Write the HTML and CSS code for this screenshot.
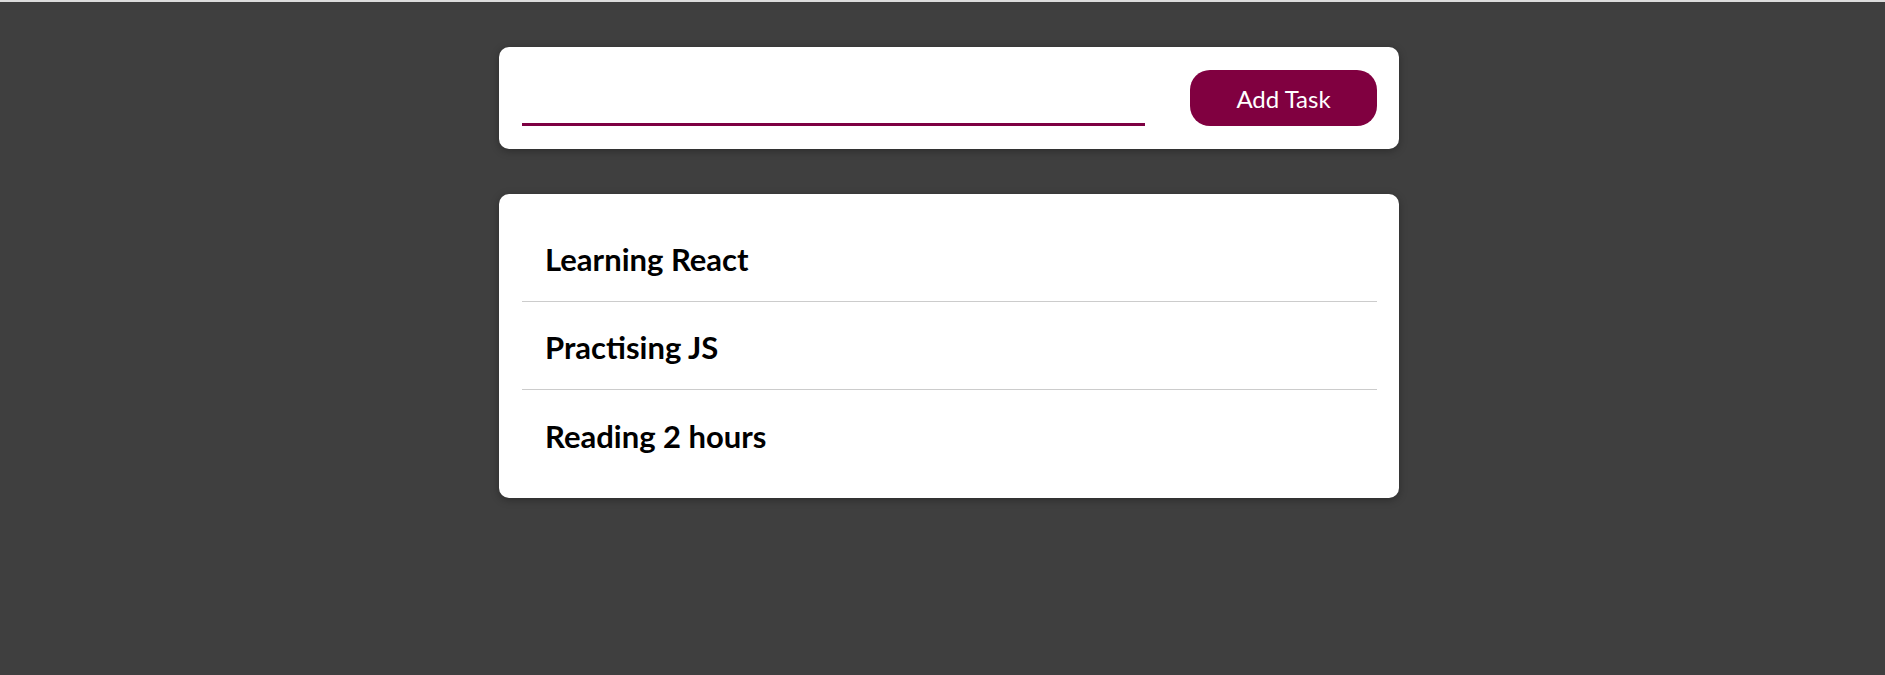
FILE: index.html
```html
<!DOCTYPE html>
<html lang="en">
<head>
<meta charset="utf-8">
<title>Tasks</title>
<link rel="stylesheet" href="styles.css">
</head>
<body>
<main class="app">
  <form class="card task-form" onsubmit="return false">
    <input class="task-input" type="text" aria-label="Task">
    <button class="add-btn" type="submit">Add Task</button>
  </form>
  <section class="card task-list-card">
    <ul class="task-list">
      <li class="task-item">Learning React</li>
      <li class="task-item">Practising JS</li>
      <li class="task-item">Reading 2 hours</li>
    </ul>
  </section>
</main>
</body>
</html>
```
FILE: styles.css
```css
* { box-sizing: border-box; }
html, body { height: 100%; }
body {
  margin: 0;
  background: #3f3f3f;
  border-top: 2px solid #dcdcdc;
  padding-left: 13px;
  font-family: "Lato", "Open Sans", sans-serif;
}
.app {
  width: 900px;
  margin: 45px auto 0;
  display: flex;
  flex-direction: column;
  gap: 45px;
}
.card {
  background: #fff;
  border-radius: 10px;
  box-shadow: 0 2px 8px rgba(0, 0, 0, 0.3);
}
.task-form {
  height: 102px;
  display: flex;
  align-items: flex-end;
  justify-content: space-between;
  padding: 23px 22px 23px 23px;
  margin: 0;
}
.task-input {
  width: 623px;
  height: 32px;
  border: none;
  border-bottom: 3px solid #7d0042;
  outline: none;
  font: inherit;
  font-size: 22px;
  padding: 0 4px;
  background: transparent;
}
.add-btn {
  width: 187px;
  height: 56px;
  border: none;
  border-radius: 20px;
  background: #800040;
  color: #fff;
  font-family: inherit;
  font-size: 24px;
  cursor: pointer;
}
.task-list-card {
  padding: 20px 22px 20px 23px;
}
.task-list {
  list-style: none;
  margin: 0;
  padding: 0;
}
.task-item {
  height: 88px;
  display: flex;
  align-items: center;
  padding: 3px 0 0 23px;
  font-size: 31px;
  font-weight: 700;
  color: #000;
  border-bottom: 1px solid #cccccc;
}
.task-item:last-child { border-bottom: none; }
```
